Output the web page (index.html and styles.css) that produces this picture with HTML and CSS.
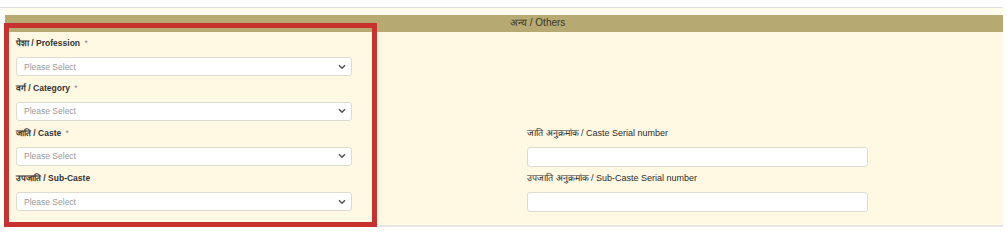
FILE: index.html
```html
<!DOCTYPE html>
<html lang="mr">
<head>
    <meta charset="UTF-8">
    <title>Others</title>
    <link rel="stylesheet" href="styles.css">
</head>
<body>
    <div class="topline"></div>

    <div class="section">
        <div class="band">अन्य / Others</div>

        <div class="fields">
            <div class="field">
                <label>पेशा / Profession <span class="req">*</span></label>
                <div class="select"><span>Please Select</span><svg width="8" height="6" viewBox="0 0 8 6"><path d="M1 1.2 L4 4.2 L7 1.2" fill="none" stroke="#555" stroke-width="1.6"/></svg></div>
            </div>
            <div class="field">
                <label>वर्ग / Category <span class="req">*</span></label>
                <div class="select"><span>Please Select</span><svg width="8" height="6" viewBox="0 0 8 6"><path d="M1 1.2 L4 4.2 L7 1.2" fill="none" stroke="#555" stroke-width="1.6"/></svg></div>
            </div>
            <div class="field">
                <label>जाति / Caste <span class="req">*</span></label>
                <div class="select"><span>Please Select</span><svg width="8" height="6" viewBox="0 0 8 6"><path d="M1 1.2 L4 4.2 L7 1.2" fill="none" stroke="#555" stroke-width="1.6"/></svg></div>
            </div>
            <div class="field right row3">
                <label>जाति अनुक्रमांक / Caste Serial number</label>
                <input type="text">
            </div>
            <div class="field">
                <label>उपजाति / Sub-Caste</label>
                <div class="select"><span>Please Select</span><svg width="8" height="6" viewBox="0 0 8 6"><path d="M1 1.2 L4 4.2 L7 1.2" fill="none" stroke="#555" stroke-width="1.6"/></svg></div>
            </div>
            <div class="field right row4">
                <label>उपजाति अनुक्रमांक / Sub-Caste Serial number</label>
                <input type="text">
            </div>
        </div>
    </div>

    <!-- 赤枠（注釈） -->
    <div class="mark"></div>
</body>
</html>
```

FILE: styles.css
```css
body {
    margin: 0;
    background: #fff;
    font-family: "Liberation Sans", Arial, sans-serif;
    color: #333;
    position: relative;
}

.topline {
    height: 7px;
    border-bottom: 1px solid #e2e2e2;
    margin-right: 4px;
}

.section {
    margin: 0 4px 0 5px;
    padding-top: 7px;
    background: #fffcee;
    border-bottom: 2px solid #e6e6e6;
}

.band {
    height: 17px;
    line-height: 16px;
    background: #b6aa72;
    color: #3a3728;
    font-size: 10px;
    padding-left: 505px;
}

.fields {
    background: #fff9e4;
    padding: 4px 0 13px 11px;
    display: grid;
    grid-template-columns: 336px 341px;
    column-gap: 175px;
    row-gap: 4.8px;
}

.field {
    grid-column: 1;
}

.field label {
    display: block;
    height: 15px;
    line-height: 15px;
    margin-bottom: 6px;
    font-size: 8.5px;
    font-weight: bold;
    color: #333;
}

.req {
    color: #888;
    font-weight: normal;
    margin-left: 2px;
}

.select {
    height: 19px;
    box-sizing: border-box;
    background: #fff;
    border: 1px solid #dedbd0;
    border-radius: 3px;
    display: flex;
    align-items: center;
    justify-content: space-between;
    padding: 0 5px 0 7px;
    font-size: 8.5px;
    color: #999;
}

.right {
    grid-column: 2;
}

.row3 { grid-row: 3; }
.row4 { grid-row: 4; }

.right label {
    font-weight: normal;
    font-size: 9px;
    color: #2b2b2b;
}

.right input {
    display: block;
    width: 100%;
    height: 20px;
    box-sizing: border-box;
    margin: 0;
    background: #fff;
    border: 1px solid #dedbd0;
    border-radius: 3px;
}

.mark {
    position: absolute;
    left: 4px;
    top: 23px;
    width: 363px;
    height: 194px;
    border: 5px solid #c8322e;
}
```
